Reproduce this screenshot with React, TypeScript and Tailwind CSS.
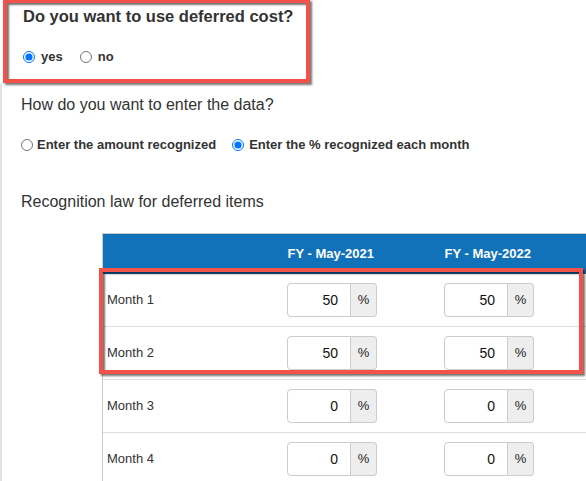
import React from "react";

function Radio({ checked, label, gap }: { checked: boolean; label: string; gap: string }) {
  return (
    <label className="flex items-center">
      <input
        type="radio"
        readOnly
        checked={checked}
        className="m-0 w-[12px] h-[12px] shrink-0"
      />
      <span className={`${gap} font-bold text-[13px] leading-[16px] text-[#333333] whitespace-nowrap`}>{label}</span>
    </label>
  );
}

function PctInput({ value }: { value: string }) {
  return (
    <div className="flex h-[34px] w-[90px]">
      <input
        readOnly
        value={value}
        className="w-[64px] h-[34px] border border-[#cccccc] rounded-l-[4px] bg-white px-[12px] text-right text-[14px] text-[#111111] outline-none font-['Liberation_Sans',Arial,sans-serif]"
      />
      <div className="w-[26px] h-[34px] border border-l-0 border-[#cccccc] rounded-r-[4px] bg-[#eeeeee] flex items-center justify-center text-[13px] text-[#222222]">
        %
      </div>
    </div>
  );
}

const rows = [
  { label: "Month 1", a: "50", b: "50" },
  { label: "Month 2", a: "50", b: "50" },
  { label: "Month 3", a: "0", b: "0" },
  { label: "Month 4", a: "0", b: "0" },
];

export default function App() {
  return (
    <div className="relative w-[586px] h-[481px] overflow-hidden bg-white text-[#333333] font-['Liberation_Sans',Arial,sans-serif]">
      <section className="h-[84px] pl-[23px] pt-[6px]">
        <h2 className="text-[16.5px] leading-[20px] font-bold">Do you want to use deferred cost?</h2>
        <div className="mt-[23px] flex items-center h-[16px]">
          <Radio checked label="yes" gap="ml-[6px]" />
          <div className="ml-[17px]">
            <Radio checked={false} label="no" gap="ml-[6px]" />
          </div>
        </div>
      </section>

      <div className="border-l-2 border-[#e2e2e2] pl-[19px] pt-[11px] h-[397px]">
        <h3 className="text-[16px] leading-[20px]">How do you want to enter the data?</h3>
        <div className="mt-[22px] flex items-center h-[16px]">
          <Radio checked={false} label="Enter the amount recognized" gap="ml-[4px]" />
          <div className="ml-[16px]">
            <Radio checked label="Enter the % recognized each month" gap="ml-[5px]" />
          </div>
        </div>
        <h3 className="mt-[39px] text-[16px] leading-[20px]">Recognition law for deferred items</h3>

        <div className="mt-[21px] ml-[81px] w-[484px] border-l border-t border-[#cccccc]">
          <div className="grid grid-cols-[125px_157px_157px_1fr] h-[40px] items-center bg-[#1172ba] text-white font-bold text-[13px]">
            <div />
            <div className="text-right pr-[11px]">FY - May-2021</div>
            <div className="text-right pr-[11px]">FY - May-2022</div>
            <div />
          </div>
          {rows.map((r) => (
            <div
              key={r.label}
              className="grid grid-cols-[125px_157px_157px_1fr] h-[53px] items-center border-b border-[#dddddd]"
            >
              <div className="pl-[4px] text-[13px] text-[#333333]">{r.label}</div>
              <div className="flex justify-end pr-[8px]">
                <PctInput value={r.a} />
              </div>
              <div className="flex justify-end pr-[8px]">
                <PctInput value={r.b} />
              </div>
              <div />
            </div>
          ))}
        </div>
      </div>

      {/* annotation highlight boxes */}
      <div className="absolute left-[3px] top-[-1px] w-[307px] h-[84px] border-4 border-[#f2524a] shadow-[2px_2px_2px_rgba(0,0,0,0.55),inset_2px_2px_2px_rgba(0,0,0,0.55)] pointer-events-none" />
      <div className="absolute left-[99px] top-[268px] w-[484px] h-[106px] border-4 border-[#f2524a] shadow-[2px_2px_2px_rgba(0,0,0,0.55),inset_2px_2px_2px_rgba(0,0,0,0.55)] pointer-events-none" />
    </div>
  );
}
